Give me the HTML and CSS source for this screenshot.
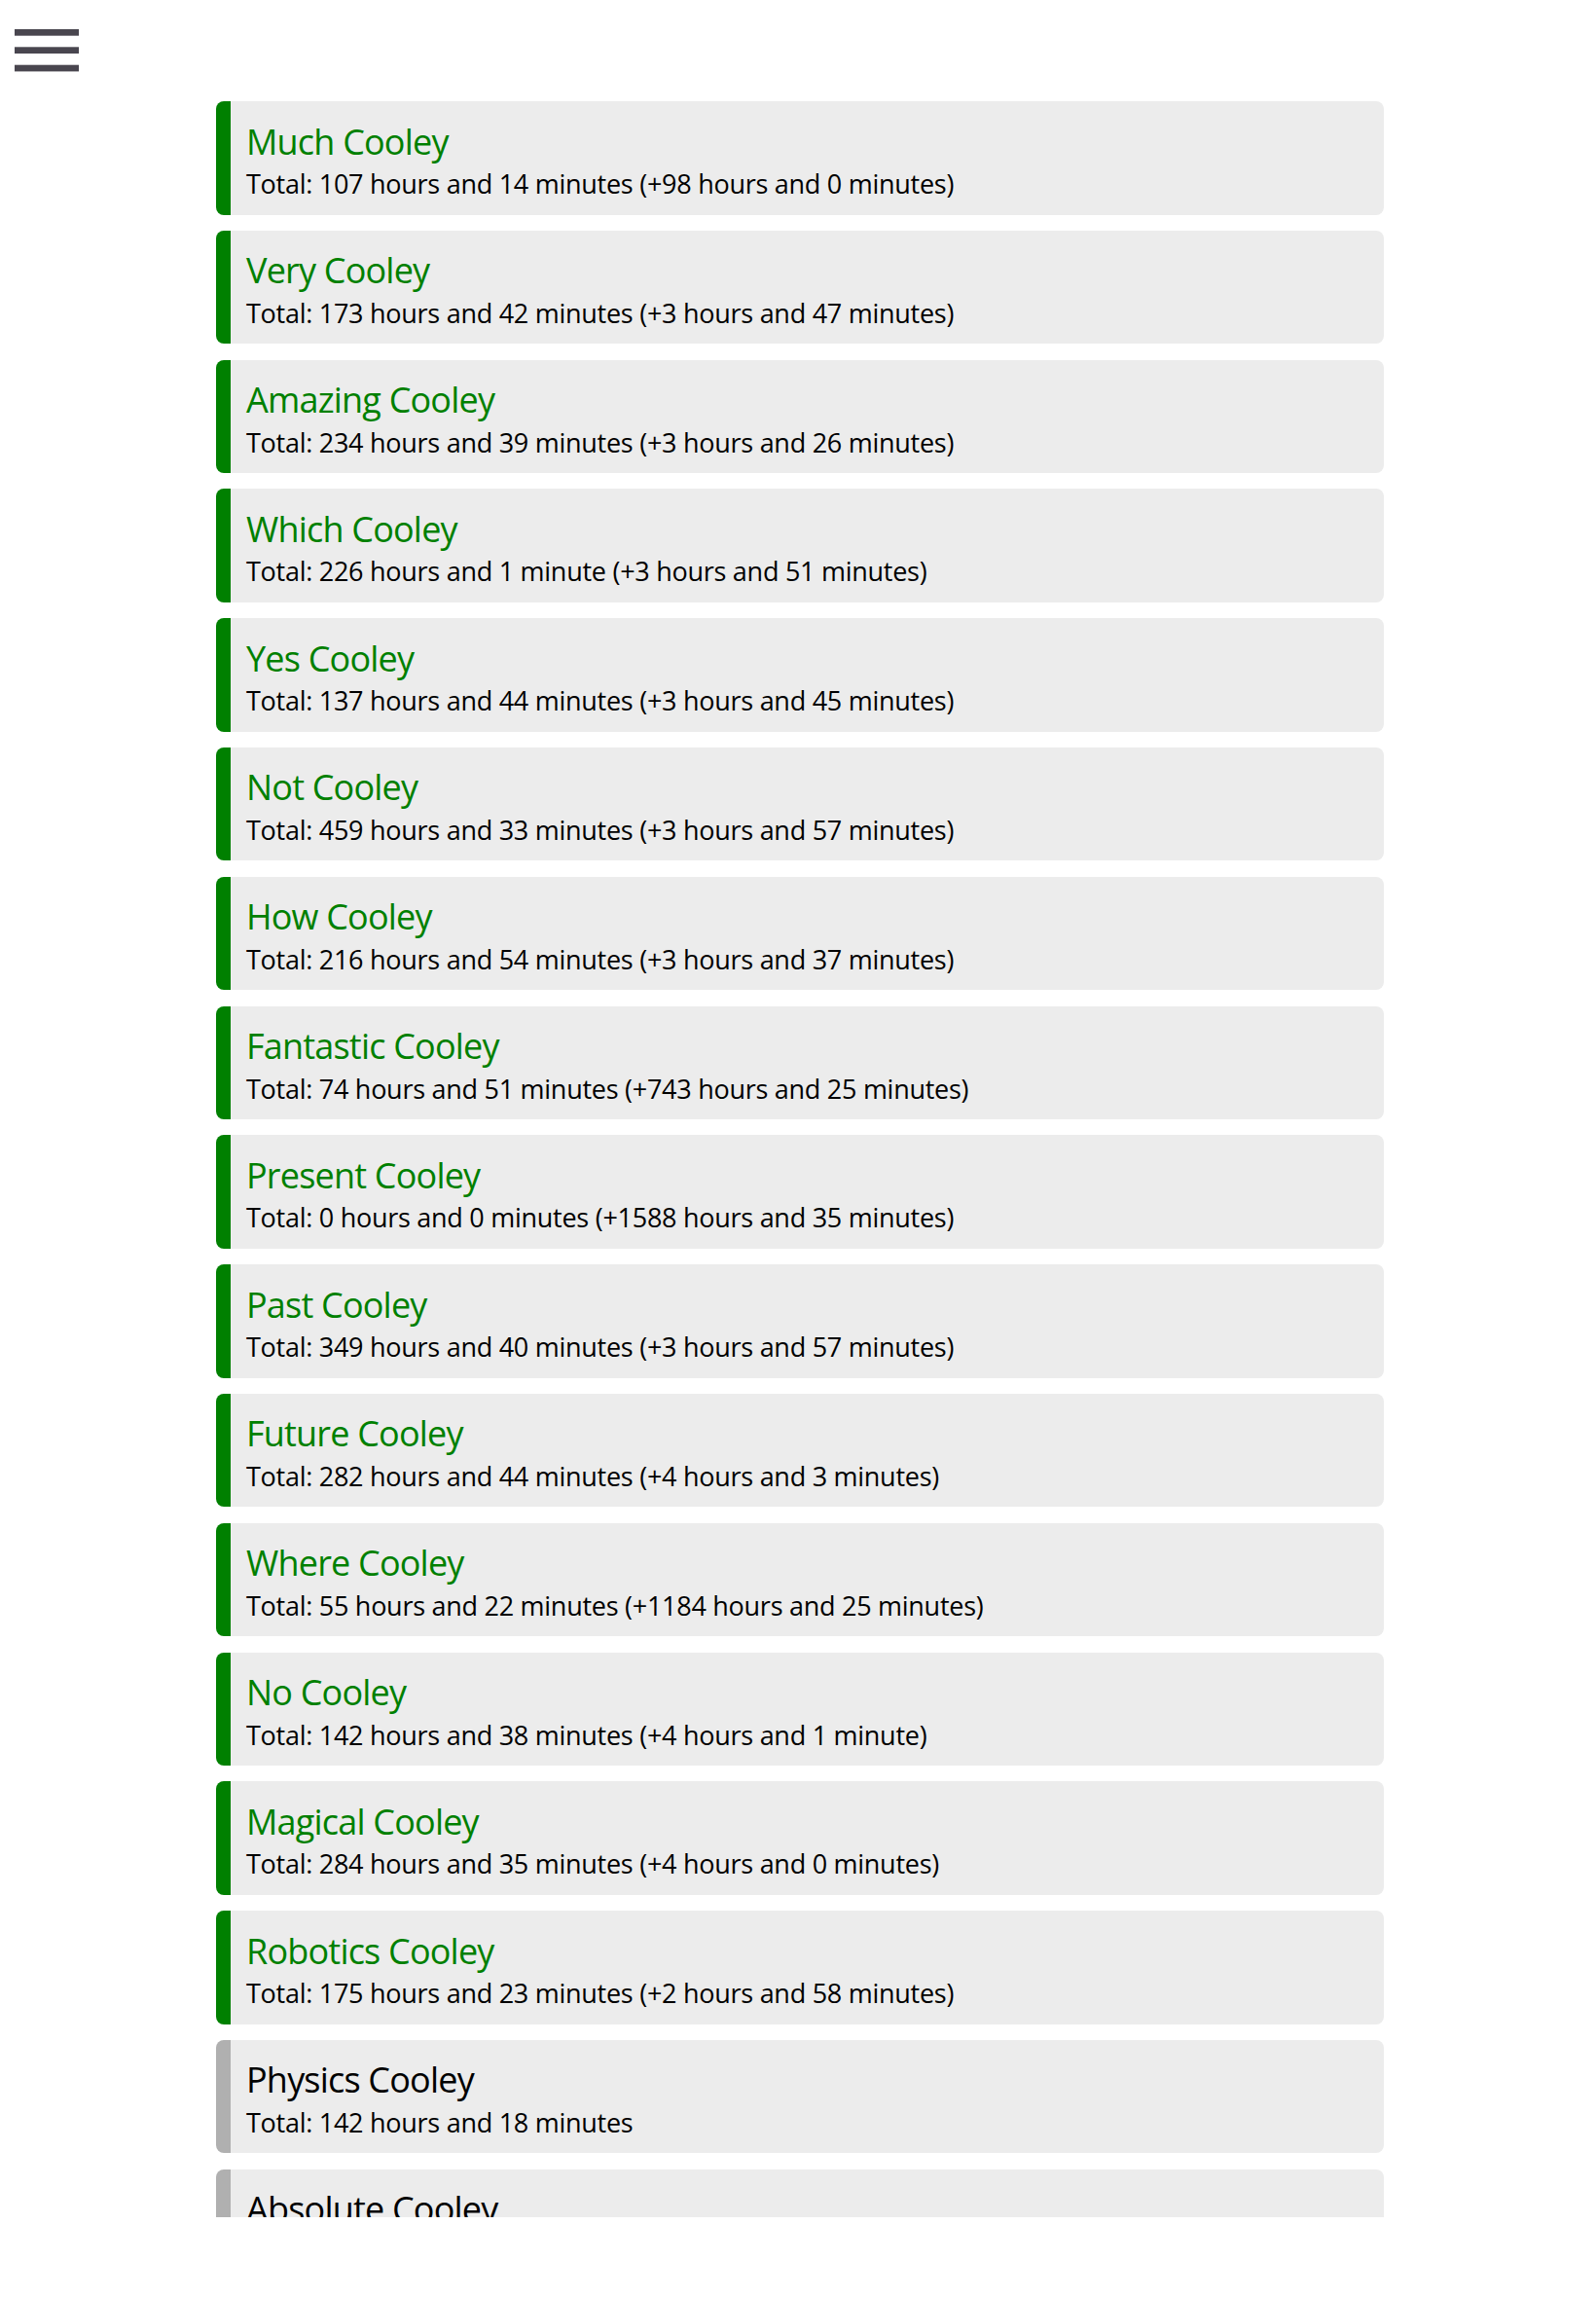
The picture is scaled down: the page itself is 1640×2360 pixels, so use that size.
FILE: index.html
```html
<!DOCTYPE html>
<html lang="en">
<head>
<meta charset="utf-8">
<title>Cooley</title>
<link rel="stylesheet" href="styles.css">
</head>
<body>
<header class="topbar">
  <button class="menu-btn" aria-label="Menu">
    <svg width="66" height="44" viewBox="0 0 66 44" aria-hidden="true">
      <rect x="0" y="0" width="66" height="6.7" fill="#49464f"/>
      <rect x="0" y="18.3" width="66" height="6.7" fill="#49464f"/>
      <rect x="0" y="36.7" width="66" height="6.7" fill="#49464f"/>
    </svg>
  </button>
</header>
<main class="list">
  <div class="card active"><div class="title">Much Cooley</div><div class="sub">Total: 107 hours and 14 minutes (+98 hours and 0 minutes)</div></div>
  <div class="card active"><div class="title">Very Cooley</div><div class="sub">Total: 173 hours and 42 minutes (+3 hours and 47 minutes)</div></div>
  <div class="card active"><div class="title">Amazing Cooley</div><div class="sub">Total: 234 hours and 39 minutes (+3 hours and 26 minutes)</div></div>
  <div class="card active"><div class="title">Which Cooley</div><div class="sub">Total: 226 hours and 1 minute (+3 hours and 51 minutes)</div></div>
  <div class="card active"><div class="title">Yes Cooley</div><div class="sub">Total: 137 hours and 44 minutes (+3 hours and 45 minutes)</div></div>
  <div class="card active"><div class="title">Not Cooley</div><div class="sub">Total: 459 hours and 33 minutes (+3 hours and 57 minutes)</div></div>
  <div class="card active"><div class="title">How Cooley</div><div class="sub">Total: 216 hours and 54 minutes (+3 hours and 37 minutes)</div></div>
  <div class="card active"><div class="title">Fantastic Cooley</div><div class="sub">Total: 74 hours and 51 minutes (+743 hours and 25 minutes)</div></div>
  <div class="card active"><div class="title">Present Cooley</div><div class="sub">Total: 0 hours and 0 minutes (+1588 hours and 35 minutes)</div></div>
  <div class="card active"><div class="title">Past Cooley</div><div class="sub">Total: 349 hours and 40 minutes (+3 hours and 57 minutes)</div></div>
  <div class="card active"><div class="title">Future Cooley</div><div class="sub">Total: 282 hours and 44 minutes (+4 hours and 3 minutes)</div></div>
  <div class="card active"><div class="title">Where Cooley</div><div class="sub">Total: 55 hours and 22 minutes (+1184 hours and 25 minutes)</div></div>
  <div class="card active"><div class="title">No Cooley</div><div class="sub">Total: 142 hours and 38 minutes (+4 hours and 1 minute)</div></div>
  <div class="card active"><div class="title">Magical Cooley</div><div class="sub">Total: 284 hours and 35 minutes (+4 hours and 0 minutes)</div></div>
  <div class="card active"><div class="title">Robotics Cooley</div><div class="sub">Total: 175 hours and 23 minutes (+2 hours and 58 minutes)</div></div>
  <div class="card idle"><div class="title">Physics Cooley</div><div class="sub">Total: 142 hours and 18 minutes</div></div>
  <div class="card idle"><div class="title">Absolute Cooley</div><div class="sub">Total: 98 hours and 12 minutes</div></div>
</main>
</body>
</html>
```
FILE: styles.css
```css
html, body {
  margin: 0;
  padding: 0;
  background: #ffffff;
}

body {
  font-family: "Open Sans", "Noto Sans", sans-serif;
  color: #000;
  height: 2360px;
  overflow: hidden;
}

.topbar {
  height: 104px;
  box-sizing: border-box;
  padding: 30px 0 0 15px;
}

.menu-btn {
  display: block;
  border: 0;
  padding: 0;
  margin: 0;
  background: transparent;
  width: 66px;
  height: 44px;
  cursor: pointer;
}

.menu-btn svg {
  display: block;
}

.list {
  height: 2174px;
  overflow: hidden;
  padding-left: 3px;
}

.card {
  width: 1200px;
  margin: 0 auto 16.3px;
  box-sizing: border-box;
  background: #ececec;
  border-radius: 8px;
  border-left: 15.5px solid #008000;
  padding: 19.5px 16px 14.5px 16.5px;
}

.card.idle {
  border-left-color: #b0b0b0;
}

.title {
  font-size: 36px;
  line-height: 44px;
  letter-spacing: -0.8px;
  color: #008000;
  white-space: nowrap;
}

.card.idle .title {
  color: #000;
}

.sub {
  margin-top: 4.5px;
  font-size: 27px;
  line-height: 34px;
  letter-spacing: -0.27px;
  color: #000;
  white-space: nowrap;
}
```
